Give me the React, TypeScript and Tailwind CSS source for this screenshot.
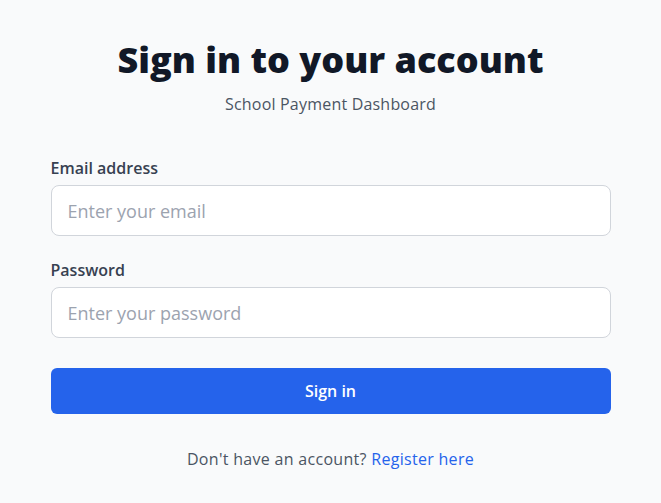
export default function App() {
  return (
    <div className="min-h-screen bg-[#f9fafb] flex justify-center px-[50px] pt-[40px] font-['Open_Sans',sans-serif]">
      <div className="w-full max-w-[560px]">
        <h1 className="text-[36px] leading-[40px] font-extrabold text-[#111827] text-center">
          Sign in to your account
        </h1>
        <p className="mt-3 text-base leading-6 text-[#4b5563] text-center tracking-[0.2px]">School Payment Dashboard</p>

        <form className="mt-10" onSubmit={(e) => e.preventDefault()}>
          <label htmlFor="email" className="block text-base leading-6 font-semibold text-[#374151]">
            Email address
          </label>
          <input
            id="email"
            type="email"
            placeholder="Enter your email"
            className="mt-[5px] block w-full h-[51px] px-4 text-lg bg-white border border-[#d1d5db] rounded-lg placeholder:text-[#9ca3af] text-[#111827] outline-none"
          />

          <label htmlFor="password" className="mt-[22px] block text-base leading-6 font-semibold text-[#374151]">
            Password
          </label>
          <input
            id="password"
            type="password"
            placeholder="Enter your password"
            className="mt-[5px] block w-full h-[51px] px-4 text-lg bg-white border border-[#d1d5db] rounded-lg placeholder:text-[#9ca3af] text-[#111827] outline-none"
          />

          <button
            type="submit"
            className="mt-[30px] w-full h-[46px] rounded-md bg-[#2563eb] text-white text-base font-semibold"
          >
            Sign in
          </button>
        </form>

        <p className="mt-[33px] text-base leading-6 text-[#4b5563] text-center tracking-[0.3px]">
          Don't have an account? <a href="#" className="text-[#2563eb]">Register here</a>
        </p>
      </div>
    </div>
  );
}
